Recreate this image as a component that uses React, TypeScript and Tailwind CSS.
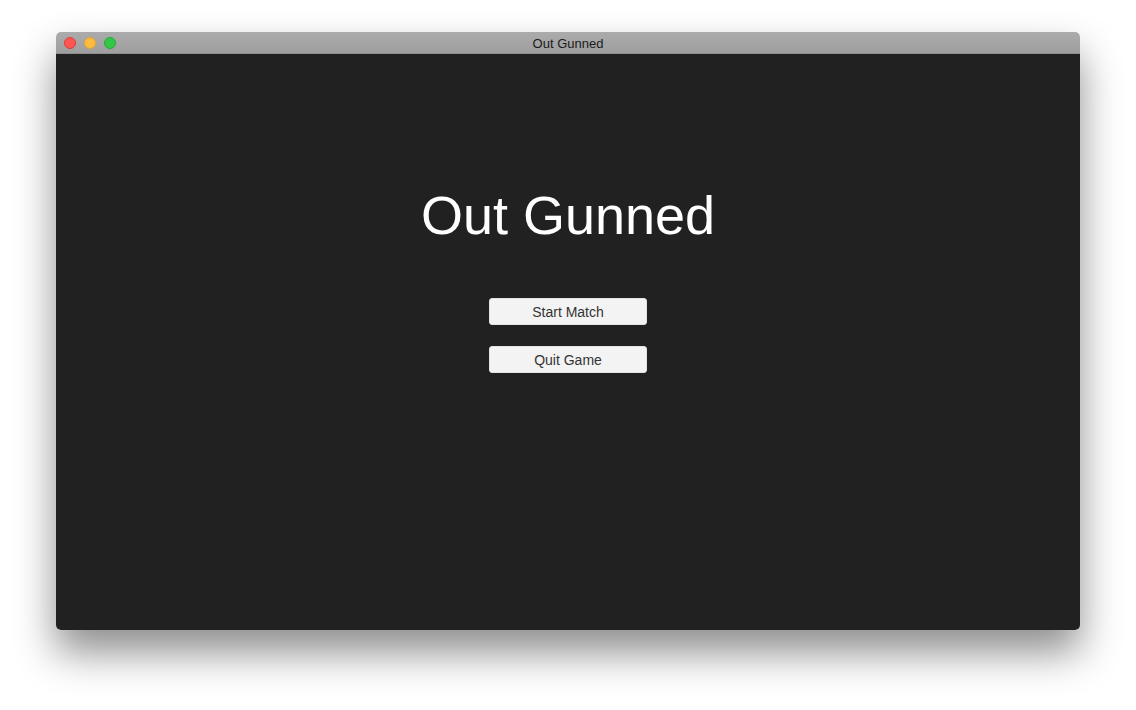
export default function App() {
  return (
    <div
      className="w-[1136px] h-[710px] bg-white pl-[56px] pt-[32px]"
      style={{ fontFamily: '"Liberation Sans", Arial, sans-serif' }}
    >
      <div className="w-[1024px] h-[598px] rounded-[5px] overflow-hidden flex flex-col shadow-[0_22px_40px_rgba(0,0,0,0.45)]">
        <div className="relative h-[22px] flex items-center justify-center bg-gradient-to-b from-[#ababab] to-[#9f9f9f] border-b border-[#8e8e8e]">
          <div className="absolute left-[8px] top-[5px] flex gap-[8px]">
            <span className="w-[12px] h-[12px] rounded-full bg-[#fc5753] border border-[#df3d38]" />
            <span className="w-[12px] h-[12px] rounded-full bg-[#fdbc40] border border-[#dea235]" />
            <span className="w-[12px] h-[12px] rounded-full bg-[#33c748] border border-[#27aa35]" />
          </div>
          <span className="text-[13px] text-[#1a1a1a] leading-none mt-[2px]">Out Gunned</span>
        </div>
        <div className="flex-1 bg-[#212121] flex flex-col items-center pt-[134px]">
          <h1 className="text-[54px] leading-none text-white">Out Gunned</h1>
          <div className="mt-[56px] flex flex-col gap-[21px]">
            <button className="w-[158px] h-[27px] pt-[2px] rounded-[3px] bg-[#f3f3f3] border border-[#e4e4e4] text-[#333] text-[14px]">
              Start Match
            </button>
            <button className="w-[158px] h-[27px] pt-[2px] rounded-[3px] bg-[#f3f3f3] border border-[#e4e4e4] text-[#333] text-[14px]">
              Quit Game
            </button>
          </div>
        </div>
      </div>
    </div>
  );
}
